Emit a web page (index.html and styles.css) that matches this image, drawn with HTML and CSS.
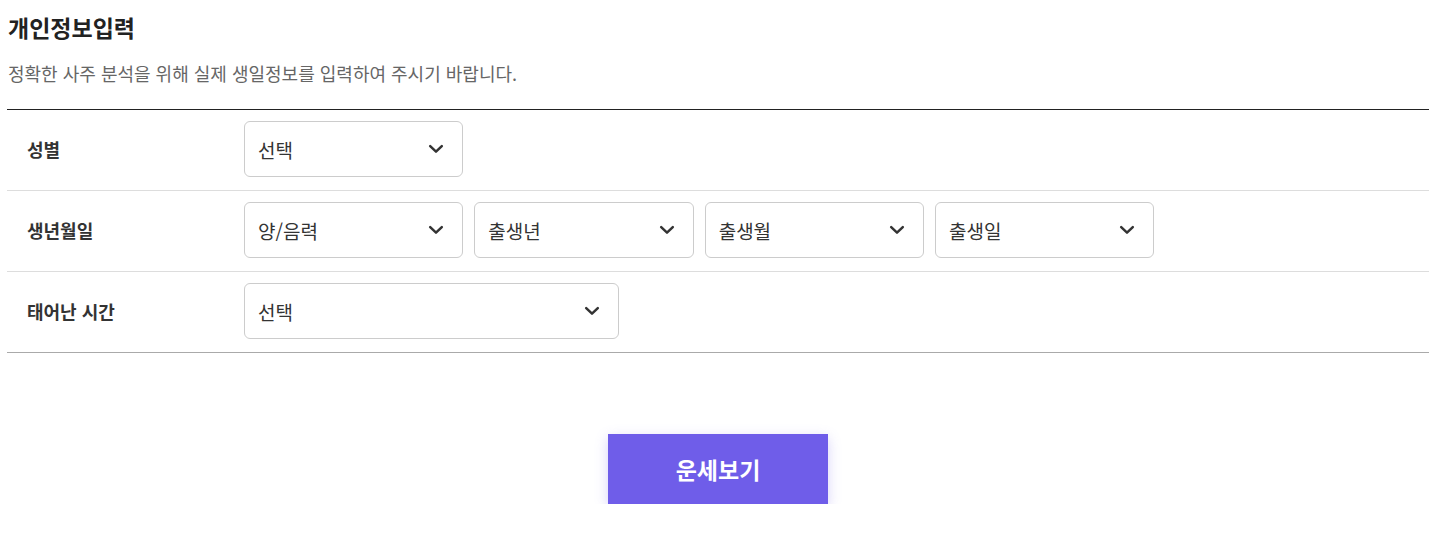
FILE: index.html
```html
<!DOCTYPE html>
<html lang="ko">
<head>
<meta charset="utf-8">
<title>개인정보입력</title>
<link rel="stylesheet" href="styles.css">
</head>
<body>
<div class="wrap">
  <h2 class="title">개인정보입력</h2>
  <p class="desc">정확한 사주 분석을 위해 실제 생일정보를 입력하여 주시기 바랍니다.</p>
  <div class="form">
    <div class="row">
      <div class="label">성별</div>
      <div class="fields">
        <div class="select"><span>선택</span><svg class="chev" viewBox="0 0 14 8"><path d="M1.2 1.2 L7 6.6 L12.8 1.2"/></svg></div>
      </div>
    </div>
    <div class="row">
      <div class="label">생년월일</div>
      <div class="fields">
        <div class="select"><span>양/음력</span><svg class="chev" viewBox="0 0 14 8"><path d="M1.2 1.2 L7 6.6 L12.8 1.2"/></svg></div>
        <div class="select"><span>출생년</span><svg class="chev" viewBox="0 0 14 8"><path d="M1.2 1.2 L7 6.6 L12.8 1.2"/></svg></div>
        <div class="select"><span>출생월</span><svg class="chev" viewBox="0 0 14 8"><path d="M1.2 1.2 L7 6.6 L12.8 1.2"/></svg></div>
        <div class="select"><span>출생일</span><svg class="chev" viewBox="0 0 14 8"><path d="M1.2 1.2 L7 6.6 L12.8 1.2"/></svg></div>
      </div>
    </div>
    <div class="row last">
      <div class="label">태어난 시간</div>
      <div class="fields">
        <div class="select wide"><span>선택</span><svg class="chev" viewBox="0 0 14 8"><path d="M1.2 1.2 L7 6.6 L12.8 1.2"/></svg></div>
      </div>
    </div>
  </div>
  <div class="actions">
    <button class="btn" type="button">운세보기</button>
  </div>
</div>
</body>
</html>
```
FILE: styles.css
```css
* { box-sizing: border-box; }
html, body { margin: 0; padding: 0; background: #fff; }
body {
  font-family: "Noto Sans CJK KR", "Noto Sans", sans-serif;
  color: #222;
}
.wrap {
  width: 1422px;
  margin-left: 7px;
  padding-top: 11px;
}
.title {
  margin: 0 0 0 1px;
  font-size: 23px;
  font-weight: 700;
  line-height: 32px;
  color: #222;
}
.desc {
  margin: 18px 0 0 1px;
  font-size: 18px;
  line-height: 24px;
  color: #666;
}
.form {
  margin-top: 24px;
  border-top: 1px solid #222;
  border-bottom: 1px solid #aaa;
}
.row {
  display: flex;
  align-items: center;
  padding: 11px 0 13px;
  border-bottom: 1px solid #ddd;
}
.row.last { border-bottom: none; }
.label {
  width: 237px;
  padding-left: 20px;
  font-size: 18px;
  font-weight: 700;
  color: #333;
}
.fields {
  display: flex;
  gap: 11px;
}
.select {
  width: 219.33px;
  height: 56px;
  border: 1px solid #ccc;
  border-radius: 6px;
  display: flex;
  align-items: center;
  justify-content: space-between;
  padding: 0 19px 0 13px;
  font-size: 19px;
  color: #333;
  background: #fff;
}
.select.wide { width: 375px; }
.chev {
  width: 14px;
  height: 8px;
  fill: none;
  stroke: #333;
  stroke-width: 2.5;
  stroke-linecap: round;
  stroke-linejoin: round;
  overflow: visible;
}
.actions {
  display: flex;
  justify-content: center;
  padding-top: 81px;
}
.btn {
  width: 220px;
  height: 70px;
  border: none;
  background: #6f5de9;
  color: #fff;
  font-family: "Noto Sans CJK KR", "Noto Sans", sans-serif;
  font-size: 23px;
  font-weight: 700;
  box-shadow: 0 4px 12px rgba(111, 93, 233, 0.28);
  cursor: pointer;
}
```
